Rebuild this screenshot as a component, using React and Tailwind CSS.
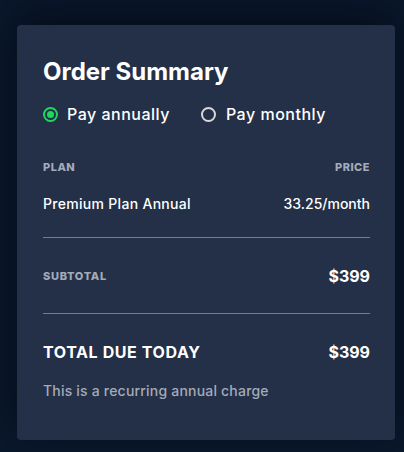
export default function App() {
  return (
    <div className="w-[404px] h-[452px] bg-[#0a182c] pt-[25px] pl-[17px] font-['Inter',sans-serif]">
      <div className="w-[378px] h-[415px] rounded-[4px] bg-[#233048] shadow-[0_-10px_40px_rgba(0,5,15,0.6)] pl-[26px] pr-[25px] pt-[32px] text-white">
        <h2 className="text-[24px] leading-[30px] font-bold tracking-[0px]">Order Summary</h2>
        <div className="flex items-center mt-[17px] h-[20px] text-[16px] font-medium tracking-[0.5px]">
          <div className="w-[15px] h-[15px] rounded-full border-2 border-[#20d660] flex items-center justify-center">
            <div className="w-[7px] h-[7px] rounded-full bg-[#20d660]"></div>
          </div>
          <span className="ml-[9px]">Pay annually</span>
          <div className="ml-[31px] w-[15px] h-[15px] rounded-full border-2 border-[#d8d8d8]"></div>
          <span className="ml-[10px]">Pay monthly</span>
        </div>
        <div className="flex justify-between mt-[36px] text-[11px] font-extrabold text-[#a3abb8] leading-[14px] tracking-[0.5px]">
          <span>PLAN</span>
          <span>PRICE</span>
        </div>
        <div className="flex justify-between mt-[21px] text-[14px] leading-[18px] font-medium">
          <span className="tracking-[0.3px]">Premium Plan Annual</span>
          <span>33.25/month</span>
        </div>
        <div className="h-px bg-[#6f7d92] mt-[24px]"></div>
        <div className="flex justify-between items-center mt-[29px] h-[18px]">
          <span className="text-[11px] font-extrabold text-[#a3abb8] tracking-[0.7px]">SUBTOTAL</span>
          <span className="text-[16px] font-bold">$399</span>
        </div>
        <div className="h-px bg-[#6f7d92] mt-[28px]"></div>
        <div className="flex justify-between items-center mt-[29px] h-[18px] text-[16px] font-bold">
          <span className="tracking-[0.6px]">TOTAL DUE TODAY</span>
          <span>$399</span>
        </div>
        <p className="mt-[21px] text-[14px] leading-[18px] text-[#a3abb8] font-medium tracking-[0.2px]">This is a recurring annual charge</p>
      </div>
    </div>
  );
}
